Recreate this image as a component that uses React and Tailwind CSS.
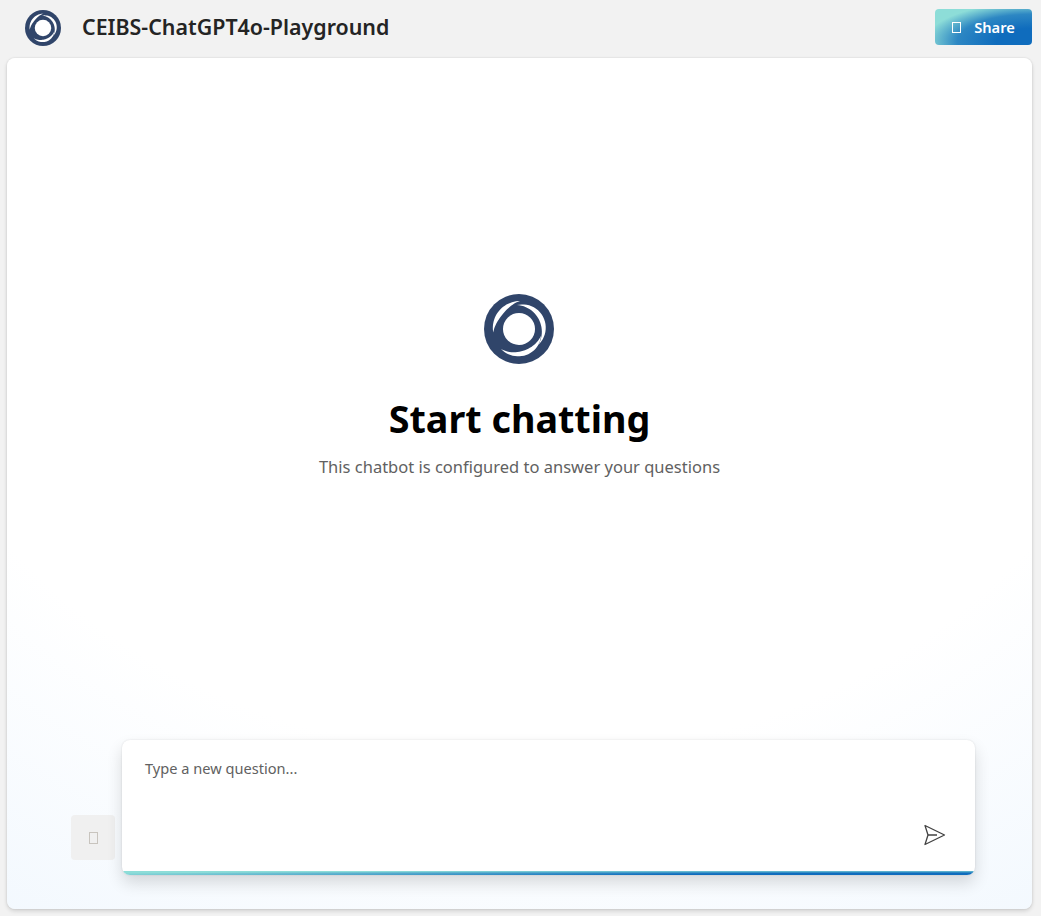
import React from 'react';

// crescent between two angles, tapering to a point at both ends
const crescent = (a0, a1, r0, r1, bulgeOut, bulgeIn) => {
  const steps = 24;
  const pts = (bulge) =>
    Array.from({ length: steps + 1 }, (_, i) => {
      const t = i / steps;
      const a = ((a0 + (a1 - a0) * t) * Math.PI) / 180;
      const r = r0 + (r1 - r0) * t + bulge * Math.sin(Math.PI * t);
      return `${(r * Math.cos(a)).toFixed(2)} ${(r * Math.sin(a)).toFixed(2)}`;
    });
  return `M${[...pts(bulgeOut), ...pts(-bulgeIn).reverse()].join(' L')} Z`;
};

const slits = [
  crescent(-88, -188, 28, 26, 0, 5),
  crescent(-95, 40, 24, 25, 2.5, 2.5),
  crescent(17, 132, 23, 27, 2, 3),
];

const Logo = ({ className }) => (
  <svg viewBox="-35 -35 70 70" className={className}>
    <circle cx="0" cy="0" r="35" fill="#30456a" />
    <circle cx="0" cy="0" r="16" fill="#fff" />
    {slits.map((d) => (
      <path key={d} d={d} fill="#fff" />
    ))}
  </svg>
);

// the original shows an empty box where its icon font failed to load
const MissingIcon = ({ className }) => (
  <span className={`inline-block w-[9px] border ${className}`} />
);

const App = () => {
  return (
    <div className="h-screen flex flex-col bg-[#f2f2f2] font-['Noto_Sans',sans-serif] overflow-hidden">
      <header className="h-[58px] shrink-0 flex items-center justify-between pl-[25px] pr-[9px] pb-[4px]">
        <div className="flex items-center gap-[21px]">
          <Logo className="w-[36px] h-[36px] mt-[2px]" />
          <h1 className="text-[21.4px] font-semibold text-[#242424]">CEIBS-ChatGPT4o-Playground</h1>
        </div>
        <button className="w-[97px] h-[36px] rounded-[4px] flex items-center justify-center gap-[13px] text-white text-[14.7px] font-semibold bg-[radial-gradient(109.81%_107.82%_at_100.1%_90.19%,#0f6cbd_33.63%,#2d87c3_70.31%,#8dddd8_100%)]">
          <MissingIcon className="h-[11px] border-white" />
          Share
        </button>
      </header>

      <main className="flex-1 ml-[7px] mr-[9px] mb-[7px] rounded-[8px] flex flex-col shadow-[0_2px_4px_rgba(0,0,0,0.14),0_0_2px_rgba(0,0,0,0.12)] bg-[radial-gradient(108.78%_108.78%_at_50.02%_19.78%,#ffffff_57.29%,#eef6fe_100%)]">
        <div className="flex-1 flex flex-col items-center justify-center pb-[26px]">
          <Logo className="w-[70px] h-[70px] mr-[1px]" />
          <h2 className="mt-[35px] text-[37.7px] leading-[40px] font-bold text-black">Start chatting</h2>
          <p className="mt-[16px] text-[16.5px] leading-[24px] text-[#616161]">This chatbot is configured to answer your questions</p>
        </div>

        <div className="flex items-end gap-[7px] pl-[64px] pr-[57px] pb-[34px]">
          <button className="w-[44px] h-[45px] mb-[15px] rounded-[4px] bg-[#f0f0f0] flex items-center justify-center">
            <MissingIcon className="h-[12px] border-[#c8c4be]" />
          </button>
          <div className="flex-1 h-[135px] bg-white rounded-[8px] overflow-hidden flex flex-col shadow-[0_8px_16px_rgba(0,0,0,0.14),0_0_2px_rgba(0,0,0,0.12)]">
            <div className="flex-1 relative px-[23px] pt-[18px] text-[14.6px] text-[#616161]">
              Type a new question...
              <svg viewBox="0 0 24 24" className="absolute right-[29px] bottom-[24px] w-[24px] h-[24px]" fill="none" stroke="#424242" strokeWidth="1.3" strokeLinejoin="round">
                <path d="M3 2.5 L22.5 12 L3 21.5 L6 12 Z" />
                <path d="M6 12 H15" />
              </svg>
            </div>
            <div className="h-[4px] bg-[radial-gradient(106.04%_106.06%_at_100.1%_90.19%,#0f6cbd_33.63%,#8dddd8_100%)]" />
          </div>
        </div>
      </main>
    </div>
  );
};

export default App;
